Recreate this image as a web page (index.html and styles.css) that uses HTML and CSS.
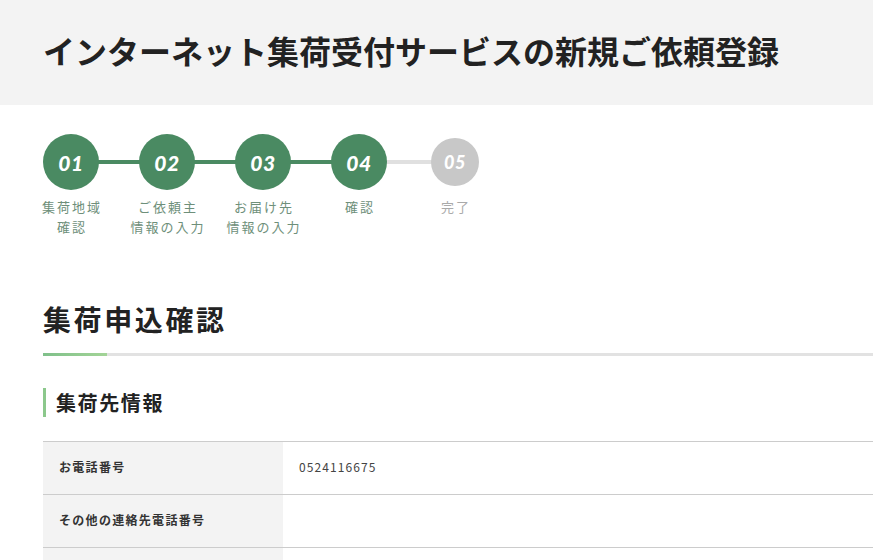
FILE: index.html
```html
<!DOCTYPE html>
<html lang="ja">
<head>
<meta charset="utf-8">
<title>インターネット集荷受付サービスの新規ご依頼登録</title>
<link rel="stylesheet" href="styles.css">
</head>
<body>
<header class="page-header">
  <h1 class="page-title">インターネット集荷受付サービスの新規ご依頼登録</h1>
</header>
<main class="main">
  <ol class="steps">
    <li class="step is-done">
      <span class="step-num">01</span>
      <span class="step-label">集荷地域<br>確認</span>
    </li>
    <li class="step is-done">
      <span class="step-num">02</span>
      <span class="step-label">ご依頼主<br>情報の入力</span>
    </li>
    <li class="step is-done">
      <span class="step-num">03</span>
      <span class="step-label">お届け先<br>情報の入力</span>
    </li>
    <li class="step is-done is-current">
      <span class="step-num">04</span>
      <span class="step-label">確認</span>
    </li>
    <li class="step is-todo">
      <span class="step-num">05</span>
      <span class="step-label">完了</span>
    </li>
  </ol>

  <h2 class="section-title">集荷申込確認</h2>

  <h3 class="sub-title">集荷先情報</h3>

  <table class="info-table">
    <tr>
      <th>お電話番号</th>
      <td class="mono">0524116675</td>
    </tr>
    <tr>
      <th>その他の連絡先電話番号</th>
      <td></td>
    </tr>
    <tr>
      <th>&nbsp;</th>
      <td></td>
    </tr>
  </table>
</main>
</body>
</html>
```
FILE: styles.css
```css
* { box-sizing: border-box; }

html, body {
  margin: 0;
  padding: 0;
  background: #fff;
  overflow: hidden;
}

body {
  font-family: "Noto Sans CJK JP", "Noto Sans", sans-serif;
  color: #222;
}

.page-header {
  background: #f3f3f3;
  height: 105px;
  padding: 0 0 0 43px;
  display: flex;
  align-items: center;
}

.page-title {
  margin: 0;
  font-size: 32px;
  font-weight: 700;
  letter-spacing: 0;
  line-height: 40px;
  color: #222;
  padding-bottom: 6px;
}

.main {
  padding: 0 0 0 43px;
}

/* steps */
.steps {
  list-style: none;
  margin: 29px 0 0;
  padding: 0;
  display: flex;
  gap: 40px;
}

.step {
  position: relative;
  width: 56px;
  display: flex;
  flex-direction: column;
  align-items: center;
}

.step + .step::before {
  content: "";
  position: absolute;
  top: 26px;
  left: -48px;
  width: 56px;
  height: 4px;
  background: #4a8a62;
  z-index: 0;
}

.step.is-todo::before {
  background: #e0e0e0;
}

.step-num {
  position: relative;
  z-index: 1;
  width: 56px;
  height: 56px;
  border-radius: 50%;
  background: #4a8a62;
  color: #fff;
  font-family: Lato, "Open Sans", sans-serif;
  font-style: italic;
  font-weight: 900;
  font-size: 21px;
  display: flex;
  align-items: center;
  justify-content: center;
  letter-spacing: 0.5px;
}

.step.is-todo .step-num {
  width: 48px;
  height: 48px;
  margin: 4px 0;
  background: #c8c8c8;
  font-size: 18px;
}

.step-label {
  width: 100px;
  margin-top: 7px;
  text-align: center;
  font-size: 13px;
  line-height: 20px;
  letter-spacing: 2px;
  color: #6e8f7a;
  padding-left: 2px;
}

.step.is-todo .step-label {
  color: #aaa;
}

/* section heading */
.section-title {
  margin: 62px 0 0;
  font-size: 28px;
  font-weight: 700;
  line-height: 40px;
  letter-spacing: 2.6px;
  padding-bottom: 14px;
  border-bottom: 3px solid #e2e2e2;
  position: relative;
  color: #222;
}

.section-title::after {
  content: "";
  position: absolute;
  left: 0;
  bottom: -3px;
  width: 64px;
  height: 3px;
  background: linear-gradient(to right, #7fc08a, #a3d497);
}

.sub-title {
  margin: 32px 0 0;
  font-size: 20px;
  font-weight: 700;
  line-height: 29px;
  letter-spacing: 1.6px;
  border-left: 3px solid #8cc88c;
  padding-left: 10px;
  color: #222;
}

/* table */
.info-table {
  margin-top: 24px;
  width: 100%;
  border-collapse: collapse;
  border-top: 1px solid #ccc;
}

.info-table tr {
  height: 53px;
  border-bottom: 1px solid #ccc;
}

.info-table th {
  width: 240px;
  background: #f3f3f3;
  text-align: left;
  font-size: 12px;
  font-weight: 700;
  letter-spacing: 1.3px;
  padding: 0 16px 3px;
  color: #333;
}

.info-table td {
  padding: 0 16px 3px;
  font-size: 12px;
  color: #444;
}

.info-table td.mono {
  letter-spacing: 1.1px;
}
```
